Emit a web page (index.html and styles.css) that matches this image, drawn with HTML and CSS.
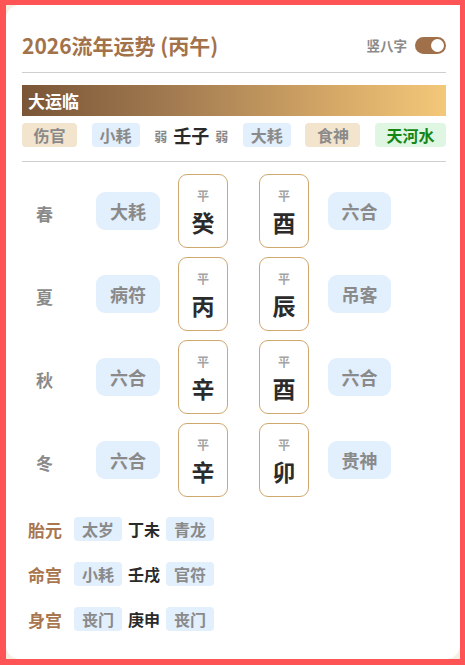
FILE: index.html
```html
<!DOCTYPE html>
<html lang="zh">
<head>
<meta charset="utf-8">
<link rel="stylesheet" href="styles.css">
</head>
<body>
<div class="frame">
  <div class="card">
    <div class="header">
      <div class="title">2026流年运势 (丙午)</div>
      <div class="switch-wrap">
        <span class="switch-label">竖八字</span>
        <span class="switch"><span class="knob"></span></span>
      </div>
    </div>
    <div class="divider"></div>
    <div class="banner">大运临</div>
    <div class="dayun">
      <span class="tag beige">伤官</span>
      <span class="tag blue">小耗</span>
      <span class="gz-group"><span class="weak">弱</span><span class="gz">壬子</span><span class="weak">弱</span></span>
      <span class="tag blue">大耗</span>
      <span class="tag beige">食神</span>
      <span class="tag green">天河水</span>
    </div>
    <div class="divider d2"></div>
    <div class="seasons">
      <div class="season">
        <span class="s-label">春</span>
        <span class="s-tag">大耗</span>
        <div class="pillar"><span class="ping">平</span><span class="char">癸</span></div>
        <div class="pillar p2"><span class="ping">平</span><span class="char">酉</span></div>
        <span class="s-tag r">六合</span>
      </div>
      <div class="season">
        <span class="s-label">夏</span>
        <span class="s-tag">病符</span>
        <div class="pillar"><span class="ping">平</span><span class="char">丙</span></div>
        <div class="pillar p2"><span class="ping">平</span><span class="char">辰</span></div>
        <span class="s-tag r">吊客</span>
      </div>
      <div class="season">
        <span class="s-label">秋</span>
        <span class="s-tag">六合</span>
        <div class="pillar"><span class="ping">平</span><span class="char">辛</span></div>
        <div class="pillar p2"><span class="ping">平</span><span class="char">酉</span></div>
        <span class="s-tag r">六合</span>
      </div>
      <div class="season">
        <span class="s-label">冬</span>
        <span class="s-tag">六合</span>
        <div class="pillar"><span class="ping">平</span><span class="char">辛</span></div>
        <div class="pillar p2"><span class="ping">平</span><span class="char">卯</span></div>
        <span class="s-tag r">贵神</span>
      </div>
    </div>
    <div class="extras">
      <div class="extra">
        <span class="e-label">胎元</span>
        <span class="tag blue">太岁</span>
        <span class="e-gz">丁未</span>
        <span class="tag blue">青龙</span>
      </div>
      <div class="extra">
        <span class="e-label">命宫</span>
        <span class="tag blue">小耗</span>
        <span class="e-gz">壬戌</span>
        <span class="tag blue">官符</span>
      </div>
      <div class="extra">
        <span class="e-label">身宫</span>
        <span class="tag blue">丧门</span>
        <span class="e-gz">庚申</span>
        <span class="tag blue">丧门</span>
      </div>
    </div>
  </div>
</div>
</body>
</html>
```
FILE: styles.css
```css
* { box-sizing: border-box; }
html, body { margin: 0; padding: 0; }
body {
  width: 465px;
  height: 665px;
  background: #fe5456;
  padding: 5px 5px 6px 6px;
  font-family: "Noto Sans CJK SC", "Noto Sans", sans-serif;
  overflow: hidden;
}
.frame {
  height: 654px;
  background: #f6eee2;
}
.card {
  height: 100%;
  background: #fff;
  border-radius: 14px 0 14px 14px;
  padding: 26px 14px 0 16px;
}
.header {
  display: flex;
  justify-content: space-between;
  align-items: center;
  height: 28px;
}
.title {
  font-size: 21px;
  font-weight: 700;
  color: #a2724b;
  line-height: 28px;
}
.switch-wrap {
  display: flex;
  align-items: center;
  gap: 8px;
}
.switch-label {
  font-size: 13.5px;
  font-weight: 700;
  color: #8a8a8a;
}
.switch {
  width: 31px;
  height: 17px;
  border-radius: 9px;
  background: #a0704b;
  display: flex;
  align-items: center;
  justify-content: flex-end;
  padding-right: 2px;
}
.knob {
  width: 13px;
  height: 13px;
  border-radius: 50%;
  background: #fff;
}
.divider {
  height: 1px;
  background: #cfcfcf;
  margin-top: 13px;
}
.banner {
  margin-top: 12px;
  height: 31px;
  background: linear-gradient(90deg, #7a5637 0%, #a17a50 35%, #d7aa68 75%, #f4c879 100%);
  color: #fff;
  font-size: 17px;
  font-weight: 700;
  line-height: 31px;
  padding-left: 6px;
}
.dayun {
  margin-top: 7px;
  display: flex;
  justify-content: space-between;
  align-items: center;
  height: 24px;
}
.tag {
  display: inline-flex;
  align-items: center;
  height: 24px;
  border-radius: 4px;
  font-size: 16px;
  font-weight: 700;
  color: #8a8a8a;
  padding: 0 8px;
  line-height: 1;
}
.tag.beige { background: #f2e4cd; padding: 0 11.5px; }
.tag.blue { background: #e2effd; }
.tag.green { background: #dff6e2; color: #158616; padding: 0 11.5px; }
.gz-group {
  display: flex;
  align-items: center;
  gap: 6px;
}
.weak {
  font-size: 13px;
  font-weight: 700;
  color: #8a8a8a;
}
.gz {
  font-size: 18px;
  font-weight: 700;
  color: #2a2a2a;
}
.d2 { margin-top: 14px; }
.seasons {
  margin-top: 12px;
  display: flex;
  flex-direction: column;
  gap: 9px;
}
.season {
  display: flex;
  align-items: center;
  height: 74px;
  padding-left: 14px;
}
.s-label {
  width: 17px;
  font-size: 17px;
  font-weight: 700;
  color: #8a8a8a;
  margin-right: 43px;
  margin-top: 4px;
}
.s-tag {
  width: 64px;
  height: 38px;
  border-radius: 9px;
  background: #e2effd;
  color: #8a8a8a;
  font-size: 18px;
  font-weight: 700;
  display: flex;
  align-items: center;
  justify-content: center;
  margin-right: 18px;
}
.s-tag.r { margin-right: 0; width: 63px; }
.pillar {
  width: 50px;
  height: 74px;
  border: 1px solid #cfa86e;
  border-radius: 9px;
  display: flex;
  flex-direction: column;
  align-items: center;
  padding-top: 13px;
  margin-right: 31px;
}
.pillar.p2 { margin-right: 19px; }
.ping {
  font-size: 12px;
  line-height: 16px;
  font-weight: 700;
  color: #a3a3a3;
}
.char {
  margin-top: 3px;
  font-size: 23px;
  line-height: 30px;
  font-weight: 700;
  color: #2b2b2b;
}
.extras {
  margin-top: 20px;
  display: flex;
  flex-direction: column;
  gap: 21px;
  padding-left: 6px;
}
.extra {
  display: flex;
  align-items: center;
  gap: 6px;
  height: 24px;
}
.e-label {
  font-size: 17px;
  font-weight: 700;
  color: #a8764f;
  margin-right: 6px;
}
.e-gz {
  font-size: 16px;
  font-weight: 700;
  color: #2a2a2a;
}
```
